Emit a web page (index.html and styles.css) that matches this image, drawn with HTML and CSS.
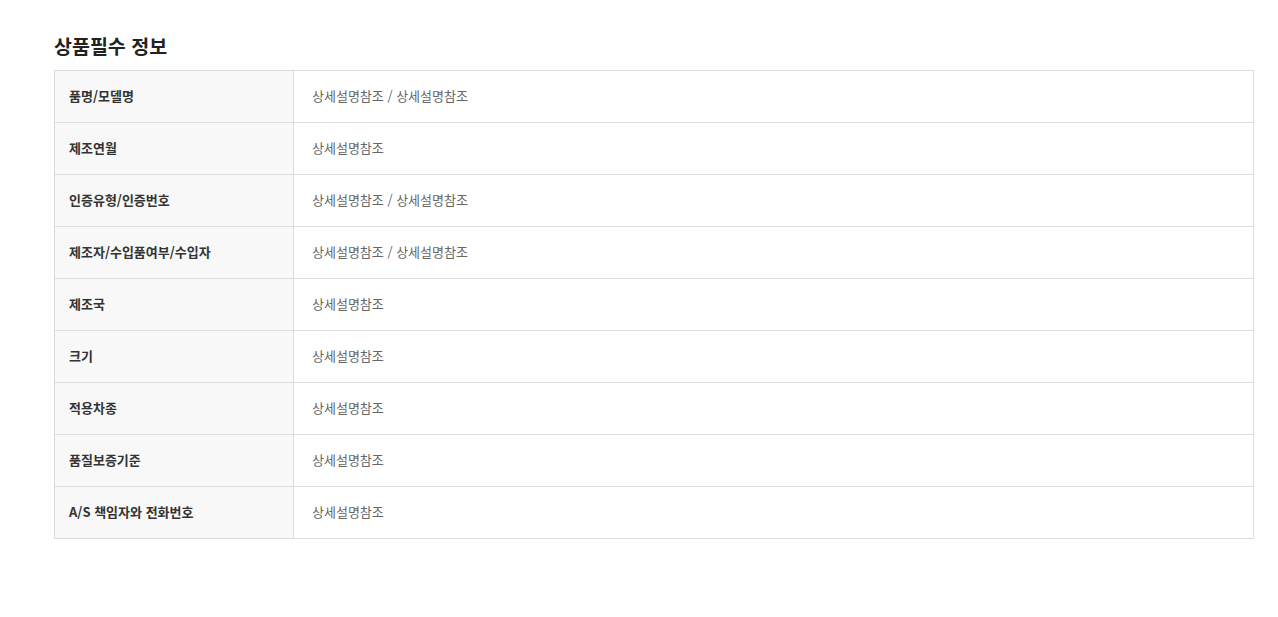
FILE: index.html
```html
<!DOCTYPE html>
<html lang="ko">
<head>
  <meta charset="UTF-8" />
  <title>상품필수 정보</title>
  <link rel="stylesheet" href="styles.css">
</head>
<body>
  <div class="container">
    <h2>상품필수 정보</h2>
    <table class="info-table">
      <tr><th>품명/모델명</th><td>상세설명참조 / 상세설명참조</td></tr>
      <tr><th>제조연월</th><td>상세설명참조</td></tr>
      <tr><th>인증유형/인증번호</th><td>상세설명참조 / 상세설명참조</td></tr>
      <tr><th>제조자/수입품여부/수입자</th><td>상세설명참조 / 상세설명참조</td></tr>
      <tr><th>제조국</th><td>상세설명참조</td></tr>
      <tr><th>크기</th><td>상세설명참조</td></tr>
      <tr><th>적용차종</th><td>상세설명참조</td></tr>
      <tr><th>품질보증기준</th><td>상세설명참조</td></tr>
      <tr><th>A/S 책임자와 전화번호</th><td>상세설명참조</td></tr>
    </table>
  </div>
</body>
</html>
```

FILE: styles.css
```css
* {
  box-sizing: border-box;
  margin: 0;
  padding: 0;
}

body {
  font-family: 'Noto Sans CJK KR', 'Noto Sans', sans-serif;
  background: #fff;
  color: #333;
}

.container {
  width: 1200px;
  margin-left: 54px;
  padding-top: 33px;
}

h2 {
  font-size: 19.5px;
  font-weight: bold;
  color: #222;
  line-height: 26px;
  margin-bottom: 11px;
}

.info-table {
  width: 100%;
  border-collapse: collapse;
  border: 1px solid #dcdcdc;
  font-size: 13px;
}

.info-table th,
.info-table td {
  height: 52px;
  border-top: 1px solid #dcdcdc;
  text-align: left;
  vertical-align: middle;
  padding-bottom: 2px;
}

.info-table th {
  width: 239px;
  background: #f8f8f8;
  border-right: 1px solid #dcdcdc;
  padding-left: 14px;
  font-weight: bold;
  color: #333;
}

.info-table td {
  padding-left: 18px;
  color: #666;
}
```
